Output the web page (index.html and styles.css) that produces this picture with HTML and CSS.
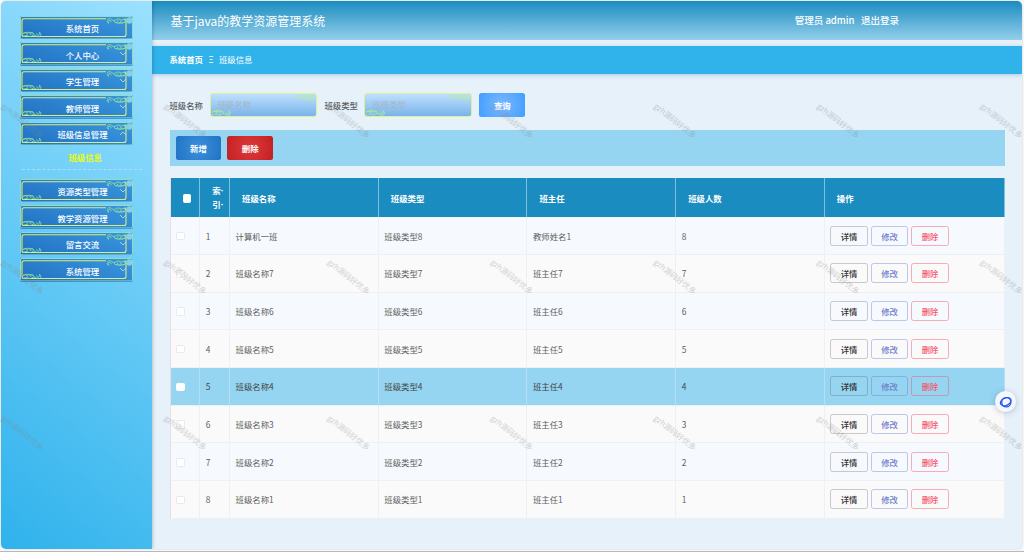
FILE: index.html
```html
<!DOCTYPE html>
<html lang="zh-CN">

<head>
    <meta charset="utf-8">
    <title>基于java的教学资源管理系统</title>
    <link rel="stylesheet" href="styles.css">
</head>

<body>
    <!-- 公用图形 -->
    <svg class="defs" width="0" height="0">
        <symbol id="curl" viewBox="0 0 20 6">
            <path d="M4.500 4.300a1.500 1.500 0 1 0-2 .8C.2 5.200-.1 1.600 2 .8c2.800-.8 3.500 1.800 5.500 1.700C9.500 2.400 9.500 1 11.500 1s2.500 1.200 4 1 2.500-1.400 4-1M7.500 2.600c.5 2.400 2.700 2.300 3.700 1.200M10.500 2.500c1.200 2.800 3.500 2.800 4.700 1.300M13.500 2.300c1 3 4 3 5.500.7M8 4.200c2.500 1.500 7.500 1.500 10.500 0" />
        </symbol>
        <symbol id="frame" viewBox="0 0 113 23.500">
            <rect class="edge" x=".5" y=".5" width="112" height="22.500" rx="1.500" />
            <path class="gold" d="M86 2.800H4Q2 2.800 2 5v13.500q0 2 2 2h100q2 0 2-2V4.500L104.500 3" />
            <g class="curl" transform="translate(86.500 2)"><use href="#curl" width="20" height="6" /></g>
            <g class="curl" transform="translate(21.500 21.500) rotate(180)"><use href="#curl" width="20" height="6" /></g>
            <circle class="pearl" cx="109.300" cy="4.500" r="2.900" />
        </symbol>
        <symbol id="down" viewBox="0 0 8 5"><path d="M1 1l3 3 3-3" /></symbol>
        <symbol id="up" viewBox="0 0 8 5"><path d="M1 4l3-3 3 3" /></symbol>
    </svg>

    <div class="wrap">
        <div class="side">
            <div class="menu"><svg class="frame"><use href="#frame" /></svg><span>系统首页</span></div>
            <div class="menu"><svg class="frame"><use href="#frame" /></svg><span>个人中心</span><svg class="arrow"><use href="#down" /></svg></div>
            <div class="menu"><svg class="frame"><use href="#frame" /></svg><span>学生管理</span><svg class="arrow"><use href="#down" /></svg></div>
            <div class="menu"><svg class="frame"><use href="#frame" /></svg><span>教师管理</span><svg class="arrow"><use href="#down" /></svg></div>
            <div class="menu"><svg class="frame"><use href="#frame" /></svg><span>班级信息管理</span><svg class="arrow"><use href="#up" /></svg></div>
            <div class="sub">班级信息</div>
            <div class="menu"><svg class="frame"><use href="#frame" /></svg><span>资源类型管理</span><svg class="arrow"><use href="#down" /></svg></div>
            <div class="menu"><svg class="frame"><use href="#frame" /></svg><span>教学资源管理</span><svg class="arrow"><use href="#down" /></svg></div>
            <div class="menu"><svg class="frame"><use href="#frame" /></svg><span>留言交流</span><svg class="arrow"><use href="#down" /></svg></div>
            <div class="menu"><svg class="frame"><use href="#frame" /></svg><span>系统管理</span><svg class="arrow"><use href="#down" /></svg></div>
        </div>

        <div class="main">
            <div class="header">
                <div class="title">基于java的教学资源管理系统</div>
                <div class="user"><span>管理员 admin</span><span>退出登录</span></div>
            </div>
            <div class="crumb"><b>系统首页</b><span class="sep">Ξ</span><span>班级信息</span></div>

            <div class="content">
                <div class="search">
                    <label>班级名称</label>
                    <div class="field">班级名称<svg class="curl tr"><use href="#curl" /></svg><svg class="curl bl"><use href="#curl" /></svg></div>
                    <label>班级类型</label>
                    <div class="field">班级类型<svg class="curl tr"><use href="#curl" /></svg><svg class="curl bl"><use href="#curl" /></svg></div>
                    <button class="btn query">查询</button>
                </div>

                <div class="tools">
                    <button class="btn add">新增</button>
                    <button class="btn remove">删除</button>
                </div>

                <table class="list">
                    <colgroup>
                        <col class="c-check"><col class="c-check"><col class="c-text"><col class="c-text"><col class="c-text"><col class="c-text"><col>
                    </colgroup>
                    <thead>
                        <tr>
                            <th class="check"><i class="box"></i></th>
                            <th class="index">索·<br>引·</th>
                            <th>班级名称</th>
                            <th>班级类型</th>
                            <th>班主任</th>
                            <th>班级人数</th>
                            <th>操作</th>
                        </tr>
                    </thead>
                    <tbody>
                        <tr><td><i class="box"></i></td><td>1</td><td>计算机一班</td><td>班级类型8</td><td>教师姓名1</td><td>8</td><td><div class="ops"><button class="op">详情</button><button class="op edit">修改</button><button class="op del">删除</button></div></td></tr>
                        <tr><td><i class="box"></i></td><td>2</td><td>班级名称7</td><td>班级类型7</td><td>班主任7</td><td>7</td><td><div class="ops"><button class="op">详情</button><button class="op edit">修改</button><button class="op del">删除</button></div></td></tr>
                        <tr><td><i class="box"></i></td><td>3</td><td>班级名称6</td><td>班级类型6</td><td>班主任6</td><td>6</td><td><div class="ops"><button class="op">详情</button><button class="op edit">修改</button><button class="op del">删除</button></div></td></tr>
                        <tr><td><i class="box"></i></td><td>4</td><td>班级名称5</td><td>班级类型5</td><td>班主任5</td><td>5</td><td><div class="ops"><button class="op">详情</button><button class="op edit">修改</button><button class="op del">删除</button></div></td></tr>
                        <tr class="on"><td><i class="box"></i></td><td>5</td><td>班级名称4</td><td>班级类型4</td><td>班主任4</td><td>4</td><td><div class="ops"><button class="op">详情</button><button class="op edit">修改</button><button class="op del">删除</button></div></td></tr>
                        <tr><td><i class="box"></i></td><td>6</td><td>班级名称3</td><td>班级类型3</td><td>班主任3</td><td>3</td><td><div class="ops"><button class="op">详情</button><button class="op edit">修改</button><button class="op del">删除</button></div></td></tr>
                        <tr><td><i class="box"></i></td><td>7</td><td>班级名称2</td><td>班级类型2</td><td>班主任2</td><td>2</td><td><div class="ops"><button class="op">详情</button><button class="op edit">修改</button><button class="op del">删除</button></div></td></tr>
                        <tr><td><i class="box"></i></td><td>8</td><td>班级名称1</td><td>班级类型1</td><td>班主任1</td><td>1</td><td><div class="ops"><button class="op">详情</button><button class="op edit">修改</button><button class="op del">删除</button></div></td></tr>
                    </tbody>
                </table>
            </div>
        </div>
    </div>

    <!-- 水印 -->
    <svg class="mark" width="1024" height="552">
        <defs>
            <pattern id="mark" x="-59.500" y="43" width="163.200" height="156" patternUnits="userSpaceOnUse">
                <text x="81.600" y="80.500" text-anchor="middle" transform="rotate(38 81.600 78)">gzh源码好优多</text>
            </pattern>
        </defs>
        <rect y="43" width="1024" height="509" fill="url(#mark)" />
    </svg>

    <div class="float">
        <svg width="14" height="14" viewBox="0 0 14 14">
            <circle cx="7.300" cy="7.300" r="4.600" />
            <ellipse cx="6.700" cy="6.700" rx="5.600" ry="3.700" transform="rotate(-25 6.700 6.700)" />
        </svg>
    </div>
</body>

</html>
```
FILE: styles.css
```css
body {
    margin: 0;
    height: 552px;
    box-sizing: border-box;
    overflow: hidden;
    position: relative;
    background: #f8f8f8;
    border-bottom: 1px solid #b8b8b8;
    font-family: "Noto Sans CJK SC", sans-serif;
    font-size: 8.4px;
    color: #5c5e62;
}

div,
button {
    box-sizing: border-box;
}

button {
    font-family: inherit;
    font-size: inherit;
    padding: 0;
    border: none;
}

.defs {
    position: absolute;
}

.wrap {
    display: flex;
    width: 1021px;
    height: 548px;
    margin: 1px 0 0 1px;
    border-radius: 5px;
    overflow: hidden;
    background: #e6f1fa;
    box-shadow: 0 0 2px rgba(0, 0, 0, .2);
}

/* 左侧菜单 */
.side {
    width: 150.5px;
    flex-shrink: 0;
    padding: 14.7px 0 0 19px;
    background: linear-gradient(38deg, #2fb2ec 0%, #9be1ff 100%);
    box-shadow: 0 0 4px rgba(0, 0, 0, .3);
    z-index: 1;
}

.menu {
    position: relative;
    width: 113px;
    height: 23.5px;
    margin-bottom: 3px;
    padding-top: 1.8px;
    border-radius: 2px;
    background: linear-gradient(20deg, #2070c1, #3b98df);
    color: #fff;
    font-weight: 500;
    line-height: 22px;
    text-align: center;
}

.menu span {
    display: block;
    width: 125px;
}

.frame {
    position: absolute;
    left: 0;
    top: 0;
    width: 113px;
    height: 23.5px;
}

.edge {
    fill: none;
    stroke: #9fe3bd;
    stroke-width: .9;
}

.gold {
    fill: none;
    stroke: #d9ee82;
    stroke-width: 1.1;
}

.pearl {
    fill: #85cff0;
    stroke: #8cdcc0;
    stroke-width: .6;
}

.curl {
    fill: none;
    stroke: #96e39a;
    stroke-width: .8;
}

.arrow {
    position: absolute;
    left: 99px;
    top: 9px;
    width: 8px;
    height: 5px;
    fill: none;
    stroke: #bfe4f4;
    stroke-width: .8;
}

.sub {
    width: 120px;
    height: 21.5px;
    margin: 0 0 9px 2px;
    border-bottom: 1px dashed #a9dff7;
    color: #e6fb14;
    font-weight: 700;
    line-height: 19px;
    text-indent: 46.5px;
}

.main {
    flex: 1;
}

.header {
    display: flex;
    justify-content: space-between;
    height: 39px;
    padding: 0 123px 0 19px;
    background: linear-gradient(180deg, #1a8cc0, #94cfeb);
    color: #fff;
    line-height: 39px;
}

.title {
    font-size: 12px;
}

.user {
    font-size: 9.5px;
    font-weight: 500;
}

.user span + span {
    margin-left: 6.5px;
}

.crumb {
    height: 28px;
    margin-top: 6px;
    padding-left: 18px;
    background: #30b2eb;
    box-shadow: 0 1px 4px rgba(60, 120, 190, .35);
    color: #fff;
    line-height: 27px;
}

.sep {
    margin: 0 5.5px;
}

.content {
    padding: 19px 17.5px 0 18px;
}

.search {
    display: flex;
    align-items: center;
    height: 24px;
    font-weight: 500;
}

.search label {
    line-height: 12px;
    padding-bottom: 1px;
}

.field {
    position: relative;
    width: 107.8px;
    height: 24px;
    margin: 0 7.2px 0 6.5px;
    padding-left: 7px;
    border: 1px solid #d8f29a;
    border-radius: 3px;
    background: linear-gradient(180deg, #bfe0fc, #79b3ea);
    color: #a3b5c6;
    font-weight: 400;
    line-height: 21px;
}

.field .curl {
    position: absolute;
    width: 20px;
    height: 6px;
    stroke: #b4f08c;
}

.tr {
    right: 0;
    top: 0;
}

.bl {
    left: 0;
    bottom: 0;
    transform: rotate(180deg);
}

.btn {
    width: 45.8px;
    height: 24px;
    border-radius: 2.5px;
    color: #fff;
    font-weight: 700;
}

.query {
    background: radial-gradient(circle, #7cb8ff, #409eff);
}

.add {
    background: radial-gradient(circle, #3b90dc, #2272c4);
}

.remove {
    background: radial-gradient(circle, #df3a3c, #c12023);
}

.tools {
    display: flex;
    gap: 6px;
    height: 36px;
    margin: 13px 0 12.3px;
    padding: 6px;
    background: #95d5f1;
}

/* 数据表格 */
.list {
    width: 835px;
    table-layout: fixed;
    border-collapse: separate;
    border-spacing: 0;
    border-left: 1px solid #e9dfe3;
}

.c-check {
    width: 29.8px;
}

.c-text {
    width: 148.7px;
}

.list th,
.list td {
    box-sizing: border-box;
    padding: 0 0 0 5.5px;
    border-right: 1px solid #eef1f4;
    border-bottom: 1px solid #eef1f4;
    text-align: left;
}

.list th {
    height: 39px;
    padding-left: 12px;
    border-right-color: #7fbfdc;
    border-bottom: none;
    background: #1a8cc0;
    color: #fff;
    font-weight: 700;
}

.list .index {
    font-family: "Open Sans", "Noto Sans CJK SC", sans-serif;
    line-height: 14px;
}

.list td {
    height: 37.7px;
    background: #fafafa;
}

.list tr:nth-child(odd) td {
    background: #f6fafe;
}

.list .on td,
.list tr.on:nth-child(odd) td {
    background: #95d5f1;
    border-right-color: #b5e0f3;
    color: #444;
}

.box {
    display: block;
    width: 8.5px;
    height: 8.5px;
    margin-top: 1px;
    box-sizing: border-box;
    border: 1px solid #e7eaee;
    border-radius: 1.5px;
    background: #fff;
}

th .box,
.on .box {
    border-color: #fff;
}

.ops {
    display: flex;
    gap: 3px;
}

.op {
    width: 37.5px;
    height: 20px;
    border: 1px solid rgba(90, 90, 90, .3);
    border-radius: 2.5px;
    background: transparent;
    color: #333;
    font-weight: 500;
}

.edit {
    border-color: rgba(104, 119, 207, .4);
    color: #6f7dcc;
}

.del {
    border-color: rgba(245, 80, 105, .45);
    color: #f5566c;
}

.mark {
    position: absolute;
    left: 0;
    top: 0;
    z-index: 2;
    fill: rgba(130, 130, 130, .38);
    font-size: 7.7px;
    pointer-events: none;
}

.float {
    position: absolute;
    left: 995px;
    top: 391px;
    z-index: 3;
    width: 21px;
    height: 21px;
    padding: 3.5px;
    border-radius: 50%;
    background: #f5f7ff;
    box-shadow: 0 1px 6px rgba(60, 80, 130, .3);
}

.float svg {
    display: block;
    fill: none;
    stroke: #2456ee;
    stroke-width: 1.3;
}
```
